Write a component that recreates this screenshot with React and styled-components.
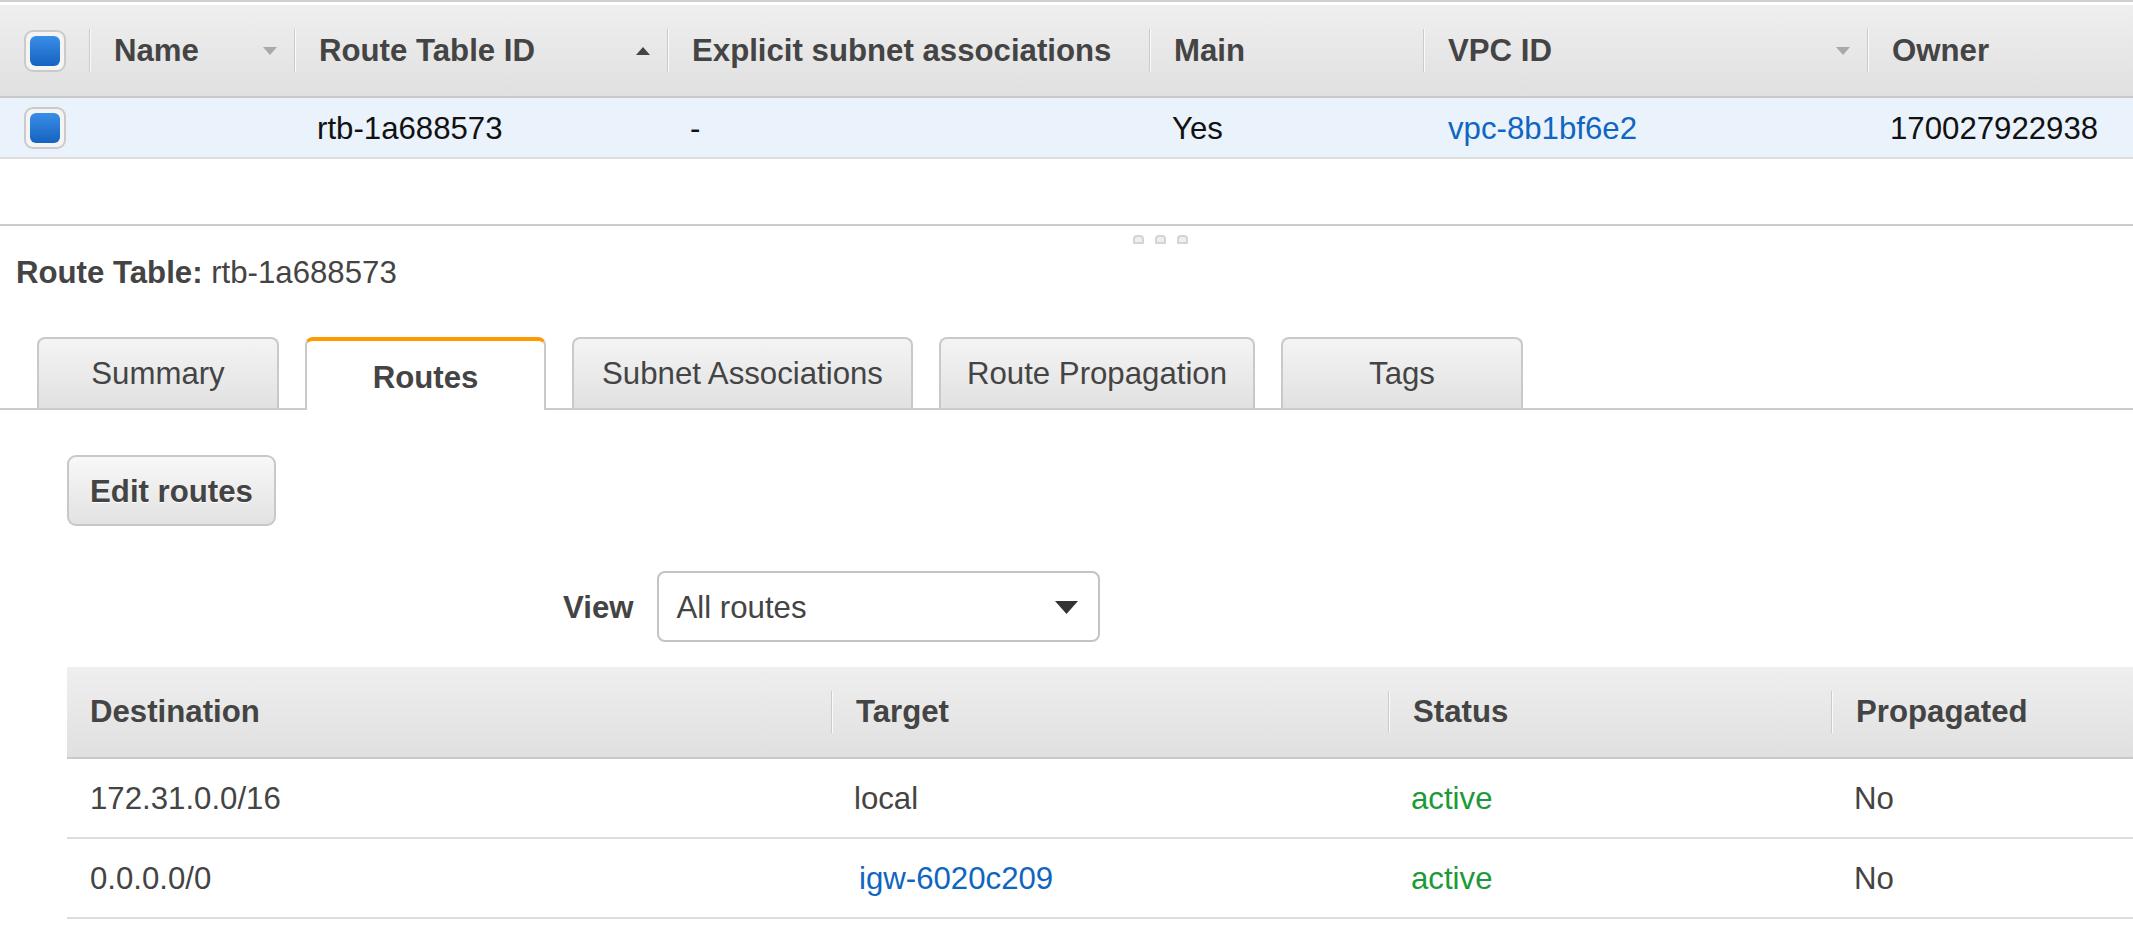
import React from "react";
import styled, { createGlobalStyle } from "styled-components";

const GlobalStyle = createGlobalStyle`
  body {
    margin: 0;
    background: #fff;
    font-family: "Liberation Sans", Arial, sans-serif;
  }
`;

const Page = styled.div`
  width: 2133px;
  font-size: 31.2px;
  color: #444;
`;

const TopPanel = styled.div`
  box-sizing: border-box;
  height: 226px;
  border-top: 2px solid #cfcfcf;
  border-bottom: 2px solid #cccccc;
  padding-top: 3px;
`;

const HeadRow = styled.div`
  display: grid;
  grid-template-columns: ${(props) => props.cols};
  height: ${(props) => props.h}px;
  border-bottom: 2px solid #c9c9c9;
  background: linear-gradient(#efefef, #e0e0e0);
`;

const BodyRow = styled.div`
  display: grid;
  grid-template-columns: ${(props) => props.cols};
  height: ${(props) => props.h}px;
  border-bottom: 2px solid #dddddd;
  background: ${(props) => (props.selected ? "#eaf2fc" : "#fff")};
`;

const HeadCell = styled.div`
  display: flex;
  align-items: center;
  padding-right: 17px;
  padding-left: ${(props) => (props.first ? "23px" : "0")};
  font-weight: bold;
  color: #444;
  white-space: nowrap;
`;

const Divider = styled.span`
  flex: none;
  width: 2px;
  height: ${(props) => props.h || 43}px;
  margin-right: 23px;
  background: linear-gradient(to right, #cbcbcb 50%, #fafafa 50%);
`;

const Arrow = styled.svg`
  margin-left: auto;
  flex: none;
`;

const BodyCell = styled.div`
  display: flex;
  align-items: center;
  padding-left: ${(props) => props.pad || 23}px;
  padding-top: 2px;
  white-space: nowrap;
  color: ${(props) =>
    props.link ? "#0f66c0" : props.ok ? "#1d9a36" : props.dark ? "#111" : "#444"};
`;

const CheckCell = styled.div`
  display: flex;
  align-items: center;
  justify-content: center;
`;

const CheckBox = styled.span`
  box-sizing: border-box;
  width: 42px;
  height: 42px;
  border: 2px solid #cacaca;
  border-radius: 9px;
  background: #f4f4f4;
  display: flex;
  align-items: center;
  justify-content: center;
  &::after {
    content: "";
    width: 30px;
    height: 30px;
    border-radius: 6px;
    background: linear-gradient(#3a8ee6, #1562c0);
  }
`;

const Handle = styled.div`
  display: flex;
  gap: 11px;
  height: 24px;
  box-sizing: border-box;
  padding: 9px 0 0 1133px;
`;

const Grip = styled.span`
  box-sizing: border-box;
  width: 11px;
  height: 9px;
  border: 2px solid #d4d4d4;
  border-radius: 4px 4px 1px 1px;
  background: #efefef;
`;

const Title = styled.div`
  margin-top: 5px;
  padding-left: 16px;
  line-height: 36px;
  b {
    font-weight: bold;
  }
`;

const TabBar = styled.div`
  display: flex;
  align-items: flex-end;
  gap: 26px;
  margin-top: 46px;
  padding-left: 37px;
  height: 71px;
  border-bottom: 2px solid #cccccc;
`;

const Tab = styled.div`
  box-sizing: border-box;
  width: ${(props) => props.w}px;
  height: ${(props) => (props.active ? 73 : 71)}px;
  margin-bottom: ${(props) => (props.active ? -2 : 0)}px;
  display: flex;
  align-items: center;
  justify-content: center;
  padding-top: ${(props) => (props.active ? 5 : 1)}px;
  border: 2px solid #c9c9c9;
  border-top: ${(props) => (props.active ? "4px solid #ff9900" : "2px solid #c9c9c9")};
  border-bottom: none;
  border-radius: 8px 8px 0 0;
  background: ${(props) => (props.active ? "#fff" : "linear-gradient(#f4f4f4, #e1e1e1)")};
  font-weight: ${(props) => (props.active ? "bold" : "normal")};
  color: #444;
  white-space: nowrap;
`;

const TabBody = styled.div`
  padding-top: 45px;
`;

const Button = styled.button`
  box-sizing: border-box;
  margin-left: 67px;
  width: 209px;
  height: 71px;
  border: 2px solid #c8c8c8;
  border-radius: 9px;
  background: linear-gradient(#f8f8f8, #e2e2e2);
  font-family: inherit;
  font-size: 31.2px;
  font-weight: bold;
  color: #444;
  text-shadow: 0 1px 0 #fff;
  padding: 2px 0 0;
`;

const ViewRow = styled.div`
  display: flex;
  align-items: center;
  gap: 23px;
  margin-top: 45px;
  padding-left: 563px;
`;

const ViewLabel = styled.span`
  font-weight: bold;
  color: #444;
  padding-top: 2px;
`;

const Select = styled.div`
  box-sizing: border-box;
  width: 443px;
  height: 71px;
  border: 2px solid #c4c4c4;
  border-radius: 8px;
  display: flex;
  align-items: center;
  justify-content: space-between;
  padding: 2px 20px 0 18px;
  color: #444;
`;

const RoutesTable = styled.div`
  margin: 25px 0 0 67px;
`;

const SortIcon = ({ up, dark }) => (
  <Arrow width="14" height="8" viewBox="0 0 14 8">
    <polygon
      points={up ? "0,8 14,8 7,0" : "0,0 14,0 7,8"}
      fill={dark ? "#444" : "#a9a9a9"}
    />
  </Arrow>
);

const topCols = "89px 205px 373px 482px 274px 444px 1fr";
const routeCols = "764px 557px 443px 1fr";

const tabs = [
  { label: "Summary", w: 242 },
  { label: "Routes", w: 241, active: true },
  { label: "Subnet Associations", w: 341 },
  { label: "Route Propagation", w: 316 },
  { label: "Tags", w: 242 },
];

const routes = [
  { dest: "172.31.0.0/16", target: "local", status: "active", prop: "No" },
  { dest: "0.0.0.0/0", target: "igw-6020c209", link: true, status: "active", prop: "No" },
];

export default function App() {
  return (
    <Page>
      <GlobalStyle />
      <TopPanel>
        <HeadRow cols={topCols} h={91}>
          <CheckCell>
            <CheckBox />
          </CheckCell>
          <HeadCell>
            <Divider />
            Name
            <SortIcon />
          </HeadCell>
          <HeadCell>
            <Divider />
            Route Table ID
            <SortIcon up dark />
          </HeadCell>
          <HeadCell>
            <Divider />
            Explicit subnet associations
          </HeadCell>
          <HeadCell>
            <Divider />
            Main
          </HeadCell>
          <HeadCell>
            <Divider />
            VPC ID
            <SortIcon />
          </HeadCell>
          <HeadCell>
            <Divider />
            Owner
          </HeadCell>
        </HeadRow>
        <BodyRow cols={topCols} h={59} selected>
          <CheckCell>
            <CheckBox />
          </CheckCell>
          <BodyCell dark />
          <BodyCell dark>rtb-1a688573</BodyCell>
          <BodyCell dark>-</BodyCell>
          <BodyCell dark>Yes</BodyCell>
          <BodyCell link pad={25}>vpc-8b1bf6e2</BodyCell>
          <BodyCell dark>170027922938</BodyCell>
        </BodyRow>
      </TopPanel>

      <Handle>
        <Grip />
        <Grip />
        <Grip />
      </Handle>

      <Title>
        <b>Route Table:</b> rtb-1a688573
      </Title>

      <TabBar>
        {tabs.map((t) => (
          <Tab key={t.label} w={t.w} active={t.active}>
            {t.label}
          </Tab>
        ))}
      </TabBar>

      <TabBody>
        <Button>Edit routes</Button>
        <ViewRow>
          <ViewLabel>View</ViewLabel>
          <Select>
            All routes
            <svg width="23" height="13" viewBox="0 0 23 13">
              <polygon points="0,0 23,0 11.5,13" fill="#333" />
            </svg>
          </Select>
        </ViewRow>

        <RoutesTable>
          <HeadRow cols={routeCols} h={90}>
            <HeadCell first>Destination</HeadCell>
            <HeadCell>
              <Divider h={42} />
              Target
            </HeadCell>
            <HeadCell>
              <Divider h={42} />
              Status
            </HeadCell>
            <HeadCell>
              <Divider h={42} />
              Propagated
            </HeadCell>
          </HeadRow>
          {routes.map((r) => (
            <BodyRow key={r.dest} cols={routeCols} h={78}>
              <BodyCell>{r.dest}</BodyCell>
              <BodyCell link={r.link} pad={r.link ? 28 : 23}>
                {r.target}
              </BodyCell>
              <BodyCell ok>{r.status}</BodyCell>
              <BodyCell>{r.prop}</BodyCell>
            </BodyRow>
          ))}
        </RoutesTable>
      </TabBody>
    </Page>
  );
}
